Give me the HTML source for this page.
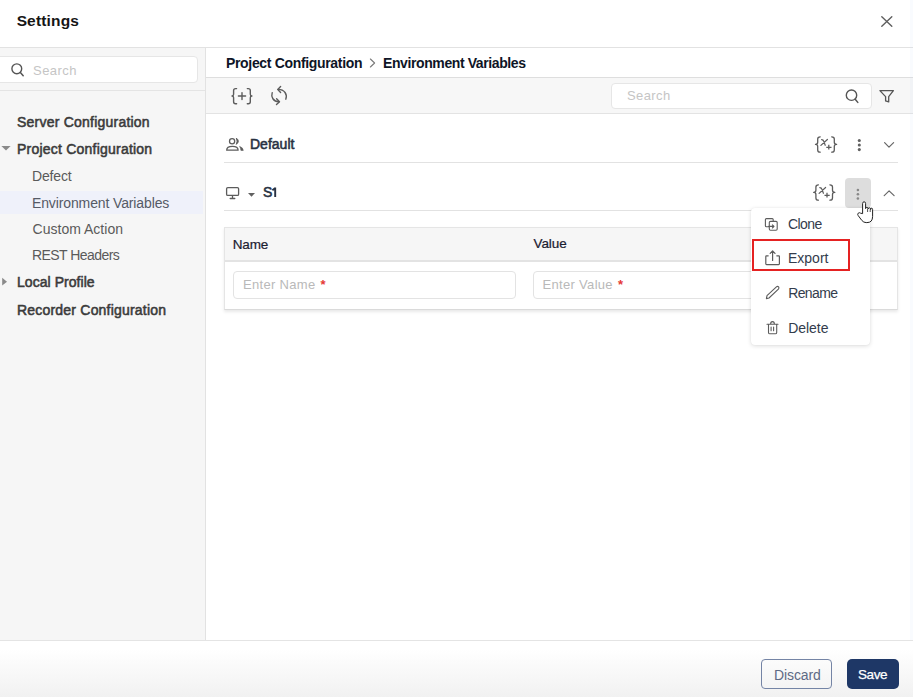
<!DOCTYPE html>
<html><head><meta charset="utf-8">
<style>
*{box-sizing:border-box;margin:0;padding:0}
html,body{width:913px;height:697px;overflow:hidden;background:#fff;font-family:"Liberation Sans",sans-serif;position:relative}
.a{position:absolute}
.t{position:absolute;white-space:pre;line-height:16px;font-size:14px}
.b{font-weight:700}
.sb{font-weight:400;-webkit-text-stroke:0.55px currentColor}
svg.L{position:absolute;left:0;top:0;overflow:visible}
.ic{fill:none;stroke:#5c5c5c;stroke-width:1.3;stroke-linecap:round;stroke-linejoin:round}
</style></head><body>

<!-- header -->
<div id="settings" class="t b" style="left:16.64px;top:12.0px;font-size:15.5px;color:#151515;line-height:18px;letter-spacing:0.16px">Settings</div>
<div class="a" style="left:0;top:47px;width:913px;height:1px;background:#e2e2e2"></div>

<!-- sidebar -->
<div class="a" style="left:0;top:48px;width:206px;height:592px;background:#f6f6f6;border-right:1px solid #e2e2e2"></div>
<div class="a" style="left:-6px;top:56px;width:204px;height:27px;background:#fff;border:1px solid #e6e6e6;border-radius:4px"></div>
<div id="search_l" class="t" style="left:33.0px;top:63.0px;color:#c5c5c5;letter-spacing:0.456px;font-size:13px">Search</div>
<div class="a" style="left:0;top:90px;width:205px;height:1px;background:#e4e4e4"></div>

<div id="server" class="t sb" style="left:17.0px;top:114.0px;color:#3b3b3b;letter-spacing:0.224px">Server Configuration</div>
<div id="project" class="t sb" style="left:17.0px;top:141.0px;color:#3b3b3b;letter-spacing:0.22px">Project Configuration</div>
<div id="defect" class="t" style="left:32.0px;top:168.0px;color:#5a5a5a;letter-spacing:-0.15px">Defect</div>
<div class="a" style="left:0;top:191px;width:203px;height:23px;background:#eff1fa"></div>
<div id="env" class="t" style="left:32.0px;top:195.0px;color:#555a66;letter-spacing:-0.125px">Environment Variables</div>
<div id="custom" class="t" style="left:32.56px;top:221.0px;color:#5a5a5a;letter-spacing:0.014px">Custom Action</div>
<div id="rest" class="t" style="left:32.0px;top:247.0px;color:#5a5a5a;letter-spacing:-0.559px">REST Headers</div>
<div id="local" class="t sb" style="left:17.0px;top:274.0px;color:#3b3b3b;letter-spacing:0.05px">Local Profile</div>
<div id="recorder" class="t sb" style="left:17.0px;top:302.0px;color:#3b3b3b;letter-spacing:0.205px">Recorder Configuration</div>

<!-- breadcrumb -->
<div id="bc1" class="t b" style="left:226.0px;top:55.0px;color:#0e1526;letter-spacing:-0.331px">Project Configuration</div>
<div id="bc2" class="t b" style="left:383.0px;top:55.0px;color:#0e1526;letter-spacing:-0.396px">Environment Variables</div>
<div class="a" style="left:206px;top:77px;width:707px;height:1px;background:#dedede"></div>

<!-- toolbar -->
<div class="a" style="left:206px;top:78px;width:707px;height:36px;background:#f7f7f7;border-bottom:1px solid #e3e3e3"></div>
<div class="a" style="left:611px;top:83px;width:261px;height:26px;background:#fff;border:1px solid #e6e6e6;border-radius:4px"></div>
<div id="search_t" class="t" style="left:627.0px;top:88.0px;color:#c5c5c5;letter-spacing:0.392px;font-size:13px">Search</div>

<!-- rows -->
<div id="default" class="t sb" style="left:250.0px;top:136.0px;color:#283142;letter-spacing:0.009px">Default</div>
<div class="a" style="left:224px;top:162px;width:674px;height:1px;background:#e2e2e2"></div>
<div id="s1" class="t sb" style="left:263.0px;top:184.0px;color:#283142">S</div>
<div class="a" style="left:845px;top:178px;width:26px;height:30px;background:#dddddd;border-radius:4px"></div>
<div class="a" style="left:224px;top:210px;width:674px;height:1px;background:#e2e2e2"></div>

<!-- table -->
<div class="a" style="left:224px;top:227px;width:674px;height:83px;background:#fff;border:1px solid #e5e5e5;border-bottom-color:#dadada;box-shadow:0 2px 3px rgba(0,0,0,0.09)"></div>
<div class="a" style="left:225px;top:228px;width:672px;height:34px;background:#f6f6f6;border-bottom:2px solid #e3e3e3"></div>
<div id="name" class="t" style="left:232.84px;top:237.0px;color:#1a2030;letter-spacing:-0.213px;font-size:13.5px;-webkit-text-stroke:0.2px #1a2030">Name</div>
<div id="value" class="t" style="left:533.44px;top:236.0px;color:#1a2030;letter-spacing:-0.04px;font-size:13.5px;-webkit-text-stroke:0.2px #1a2030">Value</div>
<div class="a" style="left:233px;top:271px;width:283px;height:28px;background:#fff;border:1px solid #e3e3e3;border-radius:4px"></div>
<div id="entername" class="t" style="left:243.0px;top:277.0px;color:#b9b9b9;letter-spacing:0.316px;font-size:13px">Enter Name</div>
<div id="ast1" class="t b" style="left:320.44px;top:277.0px;color:#e53935;font-size:13px">*</div>
<div class="a" style="left:533px;top:271px;width:283px;height:28px;background:#fff;border:1px solid #e3e3e3;border-radius:4px"></div>
<div id="entervalue" class="t" style="left:542.52px;top:277.0px;color:#b9b9b9;letter-spacing:0.312px;font-size:13px">Enter Value</div>
<div id="ast2" class="t b" style="left:617.96px;top:277.0px;color:#e53935;font-size:13px">*</div>

<!-- base icons -->
<svg class="L" width="913" height="697" viewBox="0 0 913 697">
  <!-- close -->
  <path class="ic" d="M881.8 16.8L891.8 26.3M891.8 16.8L881.8 26.3" style="stroke:#5e5e5e;stroke-width:1.4"/>
  <!-- sidebar search -->
  <circle class="ic" cx="16.8" cy="68.8" r="4.9" style="stroke:#555;stroke-width:1.4"/>
  <path class="ic" d="M20.4 72.6L23.2 75.8" style="stroke:#555;stroke-width:1.5"/>
  <!-- tree triangles -->
  <path d="M1.4 146H10.6L6 150.6Z" fill="#8a8a8a"/>
  <path d="M2.2 277.8V285.6L7 281.7Z" fill="#8a8a8a"/>
  <!-- breadcrumb chevron -->
  <path class="ic" d="M370.4 59L374.6 63L370.4 67" style="stroke:#7a7a7a;stroke-width:1.1"/>
  <!-- {+} -->
  <path class="ic" d="M236.6 88.6H235.6Q233.6 88.6 233.6 90.6V94.3Q233.6 96 232 96Q233.6 96 233.6 97.7V101.8Q233.6 103.8 235.6 103.8H236.6" style="stroke-width:1.4"/>
  <path class="ic" d="M247.3 88.6H248.3Q250.3 88.6 250.3 90.6V94.3Q250.3 96 251.9 96Q250.3 96 250.3 97.7V101.8Q250.3 103.8 248.3 103.8H247.3" style="stroke-width:1.4"/>
  <path class="ic" d="M238.4 96H245.6M242 92.6V99.6" style="stroke-width:1.4"/>
  <!-- sync -->
  <path class="ic" d="M272.2 92.6C270.8 97 273.2 101.6 279 101.7" style="stroke-width:1.4"/>
  <path class="ic" d="M276.6 98.8L279.5 101.7L276.5 104.6" style="stroke-width:1.4"/>
  <path class="ic" d="M285.8 99.2C287.6 94.4 284.6 89.4 278 89.4" style="stroke-width:1.4"/>
  <path class="ic" d="M280.6 86.6L277.8 89.4L280.6 92.4" style="stroke-width:1.4"/>
  <!-- toolbar search -->
  <circle class="ic" cx="851.5" cy="95.2" r="5.2" style="stroke:#555;stroke-width:1.4"/>
  <path class="ic" d="M855.2 99.2L857.8 102.4" style="stroke:#555;stroke-width:1.5"/>
  <!-- filter -->
  <path class="ic" d="M879.9 90.6H893.4L888.7 96.6V101.9L885.6 100.9V96.6Z" style="stroke:#555;stroke-width:1.3"/>
  <!-- people -->
  <circle class="ic" cx="232.1" cy="141.3" r="2.6"/>
  <path class="ic" d="M226.7 150.2Q226.7 146.4 232.4 146.4Q238.1 146.4 238.1 150.2Z"/>
  <path d="M236.3 138.1Q240.4 141.2 236.3 144.4Q237.9 141.2 236.3 138.1Z" fill="#5c5c5c" stroke="#5c5c5c" stroke-width="0.9" stroke-linejoin="round"/>
  <path d="M239.6 146.4Q243 147.4 243.3 150.4Q241.2 150.6 240.9 150.4Q240.8 147.8 239.6 146.4Z" fill="#5c5c5c" stroke="#5c5c5c" stroke-width="0.6" stroke-linejoin="round"/>
  <!-- {x+} row1 -->
  <path class="ic" d="M820.2 136.8Q817.7 136.8 817.7 139V142.3Q817.7 144.4 815.5 144.4Q817.7 144.4 817.7 146.5V150Q817.7 152.2 820.2 152.2" style="stroke-width:1.3"/>
  <path class="ic" d="M831.7 136.8Q834.3 136.8 834.3 139V142.3Q834.3 144.4 836.6 144.4Q834.3 144.4 834.3 146.5V150Q834.3 152.2 831.7 152.2" style="stroke-width:1.3"/>
  <path class="ic" d="M821.6 139.6Q823.3 139.6 823.9 141.6L825.2 145.3M827.4 139.5L820.9 145.4" style="stroke-width:1.2"/>
  <path class="ic" d="M826.3 147.4H831.5M828.8 144.7V149.6" style="stroke-width:1.3;stroke-linecap:butt"/>
  <!-- kebab row1 -->
  <circle cx="859.3" cy="140.5" r="1.55" fill="#616161"/>
  <circle cx="859.3" cy="145" r="1.55" fill="#616161"/>
  <circle cx="859.3" cy="149.6" r="1.55" fill="#616161"/>
  <!-- chevron down -->
  <path class="ic" d="M884.6 142.6L889 147.1L893.6 142.6" style="stroke:#666;stroke-width:1.2"/>
  <!-- monitor -->
  <rect class="ic" x="226.6" y="187.6" width="12" height="7.8" rx="1.2"/>
  <path class="ic" d="M232.5 195.6V198.4M230.2 198.5H234.8"/>
  <path d="M248 193H255L251.5 196.8Z" fill="#606060"/>
  <!-- {x+} row2 -->
  <path class="ic" d="M818.4 184.8Q815.9 184.8 815.9 187V190.3Q815.9 192.4 813.7 192.4Q815.9 192.4 815.9 194.5V198Q815.9 200.2 818.4 200.2" style="stroke-width:1.3"/>
  <path class="ic" d="M829.9 184.8Q832.5 184.8 832.5 187V190.3Q832.5 192.4 834.8 192.4Q832.5 192.4 832.5 194.5V198Q832.5 200.2 829.9 200.2" style="stroke-width:1.3"/>
  <path class="ic" d="M819.8 187.6Q821.5 187.6 822.1 189.6L823.4 193.3M825.6 187.5L819.1 193.4" style="stroke-width:1.2"/>
  <path class="ic" d="M824.5 195.4H829.7M827 192.7V197.6" style="stroke-width:1.3;stroke-linecap:butt"/>
  <!-- kebab row2 -->
  <circle cx="857.9" cy="190" r="1.3" fill="#888"/>
  <circle cx="857.9" cy="194.3" r="1.3" fill="#888"/>
  <circle cx="857.9" cy="198.5" r="1.3" fill="#888"/>
  <!-- one -->
  <path d="M272.4 190.2L275.3 187.9M275.2 187.4V196.9" stroke="#283142" stroke-width="1.9" fill="none"/>
  <!-- chevron up -->
  <path class="ic" d="M884.2 195.6L889.1 190.9L894.1 195.6" style="stroke:#666;stroke-width:1.2"/>
</svg>

<!-- menu -->
<div class="a" style="left:751px;top:208px;width:119px;height:137px;background:#fff;border-radius:4px;box-shadow:0 1px 4px rgba(0,0,0,0.14),0 0 1px rgba(0,0,0,0.08)"></div>
<div id="clone" class="t" style="left:788.0px;top:216.0px;color:#333c4c;letter-spacing:-0.6px">Clone</div>
<div class="a" style="left:752px;top:239px;width:98px;height:32px;border:2px solid #e52222"></div>
<div id="export" class="t" style="left:788.04px;top:250.0px;color:#333c4c;letter-spacing:-0.014px">Export</div>
<div id="rename" class="t" style="left:788.2px;top:285.0px;color:#333c4c;letter-spacing:-0.618px">Rename</div>
<div id="delete" class="t" style="left:788.2px;top:320.0px;color:#333c4c;letter-spacing:-0.044px">Delete</div>

<svg class="L" width="913" height="697" viewBox="0 0 913 697">
  <!-- clone -->
  <path class="ic" d="M768.6 226.8H766.4Q765.4 226.8 765.4 225.8V219.6Q765.4 218.6 766.4 218.6H772.2Q773.2 218.6 773.2 219.6V221.4" style="stroke-width:1.1"/>
  <rect class="ic" x="769.3" y="221.4" width="7.9" height="8.9" rx="1.2" style="stroke-width:1.1"/>
  <path class="ic" d="M768.6 226.4H773.8M772.4 224.8L774 226.4L772.4 228" style="stroke-width:1.1"/>
  <!-- export -->
  <path class="ic" d="M768.2 255.8H766.4Q765.8 255.8 765.8 256.4V263.8Q765.8 264.6 766.6 264.6H778.6Q779.4 264.6 779.4 263.8V256.4Q779.4 255.8 778.8 255.8H776.8" style="stroke-width:1.2"/>
  <path class="ic" d="M772.6 251V260.4M770.2 253.4L772.6 251L775 253.4" style="stroke-width:1.2"/>
  <!-- pencil -->
  <path class="ic" d="M766.4 298.6L767 295.6L776.4 286.8Q777.6 285.8 778.6 286.9Q779.4 288 778.4 289.1L769 298Z" style="stroke-width:1.1"/>
  <!-- trash -->
  <path class="ic" d="M767 324.3H778M770.6 324.3Q770.6 321.6 772.5 321.6Q774.4 321.6 774.4 324.3M768.5 324.6V332.4Q768.5 333.8 769.9 333.8H775.3Q776.7 333.8 776.7 332.4V324.6M771.1 327V330.8M773.6 327V330.8" style="stroke-width:1.1"/>
  <!-- cursor -->
  <path d="M862.6 213.6V203.6Q862.6 201.8 864.1 201.8Q865.6 201.8 865.6 203.6V208.6Q865.6 207.4 866.8 207.4Q868.1 207.4 868.1 208.6V209Q868.2 207.8 869.3 207.8Q870.6 207.8 870.6 209V209.6Q870.8 208.2 871.7 208.2Q872.6 208.2 872.6 209.6V216.4Q872.6 222.6 867 222.6H866.2Q863.6 222.6 861.8 220.4L858.2 215.6Q857.2 214.2 858.2 213.2Q859.4 212.2 860.6 213.2Z" fill="#fff" stroke="#222" stroke-width="1" stroke-linejoin="round"/>
  <path d="M867.6 209V212M870.2 209.4V212" stroke="#222" stroke-width="0.8" fill="none"/>
</svg>

<div class="a" style="left:910px;top:0;width:3px;height:640px;background:rgba(200,215,245,0.1)"></div>
<!-- footer -->
<div class="a" style="left:0;top:640px;width:913px;height:57px;border-top:1px solid #e4e4e4;background:linear-gradient(#fff 15%,#f1f1f1)"></div>
<div class="a" style="left:761px;top:659px;width:71px;height:30px;border:1.5px solid #7484a5;border-radius:4px"></div>
<div id="discard" class="t" style="left:774.0px;top:667.0px;color:#5e6a85;letter-spacing:-0.113px">Discard</div>
<div class="a" style="left:847px;top:659px;width:52px;height:30px;background:#1e3766;border-radius:5px"></div>
<div id="save" class="t" style="left:858.0px;top:667.0px;color:#fff;letter-spacing:-0.4px;font-size:13.5px;-webkit-text-stroke:0.25px #fff">Save</div>

</body></html>
